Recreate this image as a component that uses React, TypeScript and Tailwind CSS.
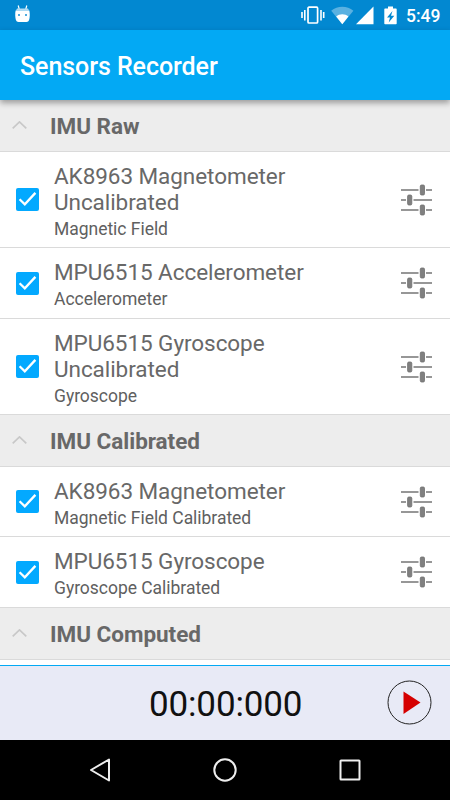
type Sensor = {
  name: string[];
  kind: string;
  height: string;
};

type SensorGroup = {
  title: string;
  sensors: Sensor[];
};

const groups: SensorGroup[] = [
  {
    title: "IMU Raw",
    sensors: [
      { name: ["AK8963 Magnetometer", "Uncalibrated"], kind: "Magnetic Field", height: "h-24" },
      { name: ["MPU6515 Accelerometer"], kind: "Accelerometer", height: "h-[71px]" },
      { name: ["MPU6515 Gyroscope", "Uncalibrated"], kind: "Gyroscope", height: "h-24" }
    ]
  },
  {
    title: "IMU Calibrated",
    sensors: [
      { name: ["AK8963 Magnetometer"], kind: "Magnetic Field Calibrated", height: "h-[70px]" },
      { name: ["MPU6515 Gyroscope"], kind: "Gyroscope Calibrated", height: "h-[71px]" }
    ]
  },
  { title: "IMU Computed", sensors: [] }
];

function StatusBar() {
  return (
    <div className="flex h-[30px] shrink-0 items-center bg-[#0288d1] text-white">
      <svg className="ml-[15px] mb-[2px] h-[18px] w-[15px]" viewBox="0 0 15 18" fill="none" aria-hidden>
        <path d="M3.2 0.5 4.2 4M11.8 0.5 10.8 4" stroke="currentColor" strokeWidth="1.2" />
        <path d="M2 3.5h11l1 2H1z" fill="#b3dcf3" />
        <path d="M.6 5.500h13.800c.6 3 .5 7-.3 9.500-.4 1.200-1.400 1.900-2.600 2H3.500c-1.200-.1-2.200-.8-2.600-2C.1 12.500 0 8.500.6 5.500z" fill="currentColor" />
        <path d="M3 9h2v2H3zM10 9h2v2h-2z" fill="#4fabe0" />
      </svg>
      <svg className="ml-auto h-[18px] w-6" viewBox="0 0 24 18" fill="none" stroke="currentColor" aria-hidden>
        <rect x="7" y="1.200" width="9.600" height="15.800" rx="1" strokeWidth="1.700" />
        <path d="M3.800 4v10.500M20 4v10.500M1 6v6M22.700 6v6" strokeWidth="1.600" />
      </svg>
      <svg className="ml-[6px] h-[19px] w-[23px]" viewBox="0 0 23 19" fill="currentColor" aria-hidden>
        <path d="M.2 4.700C3.400 2.200 7.200.8 11.300.8s7.900 1.400 11.100 3.900L11.300 18.300z" opacity=".35" />
        <path d="M5.200 10.600c1.700-1.500 3.800-2.300 6.100-2.300s4.400.8 6.100 2.300l-6.100 7.700z" />
      </svg>
      <svg className="ml-[2px] h-[19px] w-[18px]" viewBox="0 0 18 19" fill="currentColor" aria-hidden>
        <path d="M0 18.300 17.500.5v17.800z" />
      </svg>
      <svg className="ml-[10px] h-[19px] w-[13px]" viewBox="0 0 13 19" aria-hidden>
        <path d="M4 .5h5v2h3c.4 0 .7.300.7.700v14.400c0 .4-.3.700-.7.700H1c-.4 0-.7-.3-.7-.7V3.200c0-.4.300-.7.700-.7h3z" fill="currentColor" />
        <path d="M8.500 5 3 11.400h3l-1.300 5.200 5.600-6.800H7z" fill="#0288d1" />
      </svg>
      <span className="mt-px mr-2 ml-[9px] w-9 text-[17.500px] leading-[20px] font-medium">5:49</span>
    </div>
  );
}

function GroupHeader({ title }: { title: string }) {
  return (
    <div className="flex h-[52px] shrink-0 items-center border-b border-[#dadada] bg-[#ededed]">
      <svg className="mb-[2px] ml-3 h-2 w-[15px]" viewBox="0 0 15 8" fill="none" aria-hidden>
        <path d="M.7 7.300 7.500.9l6.800 6.400" stroke="#c8c8c8" strokeWidth="1.700" />
      </svg>
      <h2 className="ml-[23px] text-[22.500px] leading-[26px] font-bold tracking-[-0.03px] text-[#686868]">{title}</h2>
    </div>
  );
}

function TuneIcon() {
  return (
    <svg className="mr-[18px] ml-auto h-8 w-[31px]" viewBox="0 0 31 32" fill="none" aria-hidden>
      <path d="M0 6h17.500M25 6h6M0 16h5M12.500 16H31M0 26h17.500M25 26h6" stroke="#757575" strokeWidth="1.500" />
      <g fill="#808080" stroke="#6e6e6e" strokeWidth=".8">
        <rect x="19.300" y="1" width="4.200" height="10" rx="1.300" />
        <rect x="6.600" y="11" width="4.200" height="10" rx="1.300" />
        <rect x="19.300" y="21" width="4.200" height="10" rx="1.300" />
      </g>
    </svg>
  );
}

function SensorRow({ sensor }: { sensor: Sensor }) {
  return (
    <div className={`flex shrink-0 items-center border-b border-[#dadada] bg-white ${sensor.height}`}>
      <span className="ml-4 flex h-[23px] w-[23px] items-center justify-center rounded-[2px] bg-[#03a9ff]" role="checkbox" aria-checked="true">
        <svg className="h-[23px] w-[23px]" viewBox="0 0 23 23" fill="none" aria-hidden>
          <path d="m3.600 11.200 5.200 5.100L19.400 4.900" stroke="white" strokeWidth="2.300" />
        </svg>
      </span>
      <div className="ml-[15px] pt-[5px]">
        {sensor.name.map((line) => (
          <p key={line} className="text-[22.500px] leading-[26px] tracking-[-0.06px] text-[#686868]">
            {line}
          </p>
        ))}
        <p className="mt-[2px] text-[17.500px] leading-[25px] tracking-[-0.03px] text-[#606060]">{sensor.kind}</p>
      </div>
      <TuneIcon />
    </div>
  );
}

export default function App() {
  return (
    <div className="flex h-[800px] w-[450px] flex-col overflow-hidden bg-white font-['Roboto',sans-serif]">
      <StatusBar />
      <header className="z-10 flex h-[70px] shrink-0 items-center bg-[#03a9f4] px-5 shadow-[0_3px_6px_rgba(0,0,0,0.35)]">
        <h1 className="mt-[3px] text-[25px] leading-[30px] font-medium tracking-[-0.06px] text-white">Sensors Recorder</h1>
      </header>
      <main className="flex min-h-0 flex-1 flex-col overflow-hidden">
        {groups.map((group) => (
          <section key={group.title}>
            <GroupHeader title={group.title} />
            {group.sensors.map((sensor) => (
              <SensorRow key={sensor.name[0]} sensor={sensor} />
            ))}
          </section>
        ))}
      </main>
      <footer className="flex h-[75px] shrink-0 items-center border-t border-[#03a9f4] bg-[#e8eaf6]">
        <span className="ml-[149px] pt-[2px] text-[35px] leading-[41px] tracking-[-0.15px] text-[#111111]">00:00:000</span>
        <button className="mr-[18px] mb-[2px] ml-auto" type="button" aria-label="Record">
          <svg className="h-[45px] w-[45px]" viewBox="0 0 45 45" fill="none">
            <circle cx="22.500" cy="22.500" r="21.500" stroke="#222222" strokeWidth="1" />
            <path d="M16.500 11.500 33.500 22.500l-17 11.500z" fill="#d50000" />
          </svg>
        </button>
      </footer>
      <nav className="flex h-[60px] shrink-0 items-center justify-between bg-black px-[88px] text-[#eeeeee]">
        <svg className="h-6 w-6" viewBox="0 0 24 24" fill="none" stroke="currentColor" strokeWidth="2" strokeLinejoin="round" aria-hidden>
          <path d="M3 12 21 1.500v21z" />
        </svg>
        <svg className="h-6 w-6" viewBox="0 0 24 24" fill="none" stroke="currentColor" strokeWidth="2" aria-hidden>
          <circle cx="12" cy="12" r="10.700" />
        </svg>
        <svg className="h-6 w-6" viewBox="0 0 24 24" fill="none" stroke="currentColor" strokeWidth="2" aria-hidden>
          <rect x="2.500" y="2.500" width="19" height="19" rx=".5" />
        </svg>
      </nav>
    </div>
  );
}
